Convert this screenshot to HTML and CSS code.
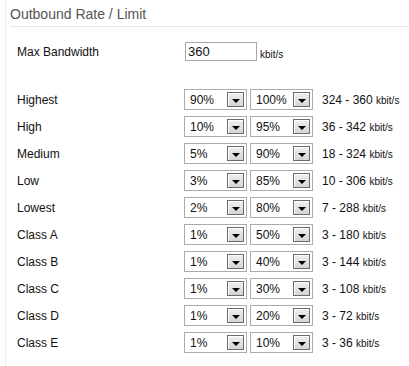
FILE: index.html
```html
<!DOCTYPE html>
<html lang="en">
<head>
  <meta charset="UTF-8" />
  <title>Outbound Rate / Limit</title>
  <link rel="stylesheet" href="styles.css">
</head>
<body>
  <div class="panel">
    <div class="title">Outbound Rate / Limit</div>

    <div class="form">
      <div class="row bw-row">
        <span class="label">Max Bandwidth</span>
        <input class="bw-input" type="text" value="360">
        <span class="unit bw-unit">kbit/s</span>
      </div>

      <div class="classes">
        <div class="row">
          <span class="label">Highest</span>
          <div class="pick"><span>90%</span><i class="arrow"></i></div>
          <div class="pick"><span>100%</span><i class="arrow"></i></div>
          <span class="range">324 - 360 <span class="unit">kbit/s</span></span>
        </div>
        <div class="row">
          <span class="label">High</span>
          <div class="pick"><span>10%</span><i class="arrow"></i></div>
          <div class="pick"><span>95%</span><i class="arrow"></i></div>
          <span class="range">36 - 342 <span class="unit">kbit/s</span></span>
        </div>
        <div class="row">
          <span class="label">Medium</span>
          <div class="pick"><span>5%</span><i class="arrow"></i></div>
          <div class="pick"><span>90%</span><i class="arrow"></i></div>
          <span class="range">18 - 324 <span class="unit">kbit/s</span></span>
        </div>
        <div class="row">
          <span class="label">Low</span>
          <div class="pick"><span>3%</span><i class="arrow"></i></div>
          <div class="pick"><span>85%</span><i class="arrow"></i></div>
          <span class="range">10 - 306 <span class="unit">kbit/s</span></span>
        </div>
        <div class="row">
          <span class="label">Lowest</span>
          <div class="pick"><span>2%</span><i class="arrow"></i></div>
          <div class="pick"><span>80%</span><i class="arrow"></i></div>
          <span class="range">7 - 288 <span class="unit">kbit/s</span></span>
        </div>
        <div class="row">
          <span class="label">Class A</span>
          <div class="pick"><span>1%</span><i class="arrow"></i></div>
          <div class="pick"><span>50%</span><i class="arrow"></i></div>
          <span class="range">3 - 180 <span class="unit">kbit/s</span></span>
        </div>
        <div class="row">
          <span class="label">Class B</span>
          <div class="pick"><span>1%</span><i class="arrow"></i></div>
          <div class="pick"><span>40%</span><i class="arrow"></i></div>
          <span class="range">3 - 144 <span class="unit">kbit/s</span></span>
        </div>
        <div class="row">
          <span class="label">Class C</span>
          <div class="pick"><span>1%</span><i class="arrow"></i></div>
          <div class="pick"><span>30%</span><i class="arrow"></i></div>
          <span class="range">3 - 108 <span class="unit">kbit/s</span></span>
        </div>
        <div class="row">
          <span class="label">Class D</span>
          <div class="pick"><span>1%</span><i class="arrow"></i></div>
          <div class="pick"><span>20%</span><i class="arrow"></i></div>
          <span class="range">3 - 72 <span class="unit">kbit/s</span></span>
        </div>
        <div class="row">
          <span class="label">Class E</span>
          <div class="pick"><span>1%</span><i class="arrow"></i></div>
          <div class="pick"><span>10%</span><i class="arrow"></i></div>
          <span class="range">3 - 36 <span class="unit">kbit/s</span></span>
        </div>
      </div>
    </div>
  </div>
</body>
</html>
```

FILE: styles.css
```css
html, body {
  margin: 0;
  background: #fff;
}

body {
  font-family: "Liberation Sans", Arial, sans-serif;
  font-size: 12px;
  color: #111;
}

.panel {
  margin-left: 5px;
  border-left: 1px solid #ececec;
  min-height: 366px;
  box-sizing: border-box;
}

.title {
  margin-left: 4px;
  padding-top: 6px;
  padding-bottom: 4px;
  line-height: 16px;
  font-size: 14px;
  color: #555;
  border-bottom: 1px solid #e6e6e6;
}

.form {
  padding-left: 11px;
  margin-top: 11px;
}

.row {
  display: flex;
  align-items: center;
  height: 27px;
}

.label {
  width: 167px;
  flex: none;
}

.bw-row {
  margin-bottom: 21px;
}

.bw-input {
  width: 72px;
  height: 19px;
  box-sizing: border-box;
  margin: 0 0 0 1px;
  padding: 0 2px;
  border: 1px solid #a8a8a8;
  font-family: "Liberation Sans", Arial, sans-serif;
  font-size: 13px;
  color: #111;
  outline: none;
}

.bw-unit {
  margin-left: 3px;
  padding-top: 5px;
}

.pick {
  width: 63px;
  height: 21px;
  box-sizing: border-box;
  border: 1px solid #ababab;
  display: flex;
  align-items: center;
  justify-content: space-between;
  padding: 0 2px 0 5px;
  margin-right: 3px;
  background: #fff;
}

.pick + .pick {
  margin-right: 9px;
}

.arrow {
  width: 17px;
  height: 15px;
  box-sizing: border-box;
  border: 1px solid #6a6a6a;
  background: linear-gradient(#f0f0f0, #d4d4d4);
  box-shadow: inset 1px 1px 0 #fff;
  position: relative;
}

.arrow::after {
  content: "";
  position: absolute;
  left: 4px;
  top: 6px;
  border-left: 4px solid transparent;
  border-right: 4px solid transparent;
  border-top: 4px solid #000;
}

.unit {
  font-size: 10px;
}
```
